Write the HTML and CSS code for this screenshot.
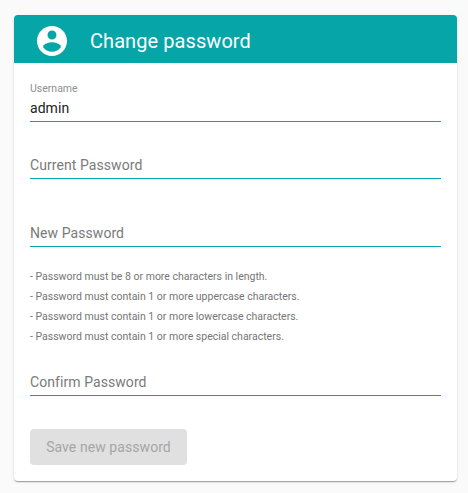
FILE: index.html
```html
<!DOCTYPE html>
<html lang="en">
<head>
<meta charset="utf-8">
<title>Change password</title>
<link rel="stylesheet" href="styles.css">
</head>
<body>
<main class="card">
  <header class="card-header">
    <svg class="avatar" viewBox="0 0 24 24" aria-hidden="true"><path d="M12 2C6.48 2 2 6.48 2 12s4.48 10 10 10 10-4.48 10-10S17.52 2 12 2zm0 3c1.66 0 3 1.34 3 3s-1.34 3-3 3-3-1.34-3-3 1.34-3 3-3zm0 14.2c-2.5 0-4.71-1.28-6-3.22.03-1.99 4-3.08 6-3.08 1.99 0 5.97 1.09 6 3.08-1.29 1.94-3.5 3.22-6 3.22z"/></svg>
    <h1 class="card-title">Change password</h1>
  </header>
  <form class="form">
    <div class="field field-filled">
      <span class="field-label">Username</span>
      <span class="field-value">admin</span>
    </div>
    <div class="field field-current"><span class="field-placeholder">Current Password</span></div>
    <div class="field field-new"><span class="field-placeholder">New Password</span></div>
    <ul class="hints">
      <li>- Password must be 8 or more characters in length.</li>
      <li>- Password must contain 1 or more uppercase characters.</li>
      <li>- Password must contain 1 or more lowercase characters.</li>
      <li>- Password must contain 1 or more special characters.</li>
    </ul>
    <div class="field field-confirm"><span class="field-placeholder">Confirm Password</span></div>
    <button class="save" type="button" disabled>Save new password</button>
  </form>
</main>
</body>
</html>
```
FILE: styles.css
```css
* { box-sizing: border-box; }
html, body { height: 100%; }
body {
  margin: 0;
  padding: 15px 11px 12px 14px;
  background: #fafafa;
  font-family: Roboto, "Liberation Sans", sans-serif;
  overflow: hidden;
}
.card {
  width: 443px;
  height: 466px;
  background: #fff;
  border-radius: 4px;
  overflow: hidden;
  box-shadow: 0 2px 1px -1px rgba(0,0,0,.2), 0 1px 1px 0 rgba(0,0,0,.14), 0 1px 3px 0 rgba(0,0,0,.12);
}
.card-header {
  height: 48px;
  background: #06a5a8;
  display: flex;
  align-items: center;
  padding: 3px 0 0 20px;
  color: #fff;
}
.avatar { width: 36px; height: 36px; fill: #fff; flex: none; }
.card-title {
  margin: 0 0 0 20px;
  font-size: 20px;
  font-weight: 400;
  letter-spacing: .07px;
  line-height: 24px;
}
.form { padding: 0 16px; }
.field {
  border-bottom: 1px solid #06a5a8;
  display: flex;
  flex-direction: column;
  justify-content: flex-end;
  padding-bottom: 4px;
}
.field-filled { margin-top: 18px; height: 41px; }
.field-current { margin-top: 16px; height: 41px; }
.field-new { margin-top: 27px; height: 41px; }
.field-confirm { margin-top: 8px; height: 41px; }
.field-label { font-size: 10.5px; line-height: 12px; color: #8f8f8f; margin-bottom: 5px; }
.field-value { font-size: 14px; line-height: 17px; color: #212121; letter-spacing: .05px; }
.field-placeholder { font-size: 14px; line-height: 17px; color: #7a7a7a; letter-spacing: .07px; }
.hints {
  list-style: none;
  margin: 20px 0 0;
  padding: 0;
  font-size: 10.5px;
  line-height: 20px;
  color: #757575;
}
.save {
  display: block;
  margin-top: 33px;
  width: 157px;
  height: 36px;
  border: 0;
  border-radius: 4px;
  background: #e0e0e0;
  color: #a6a6a6;
  font: 400 14px Roboto, "Liberation Sans", sans-serif;
  letter-spacing: .07px;
  padding: 0;
}
```
